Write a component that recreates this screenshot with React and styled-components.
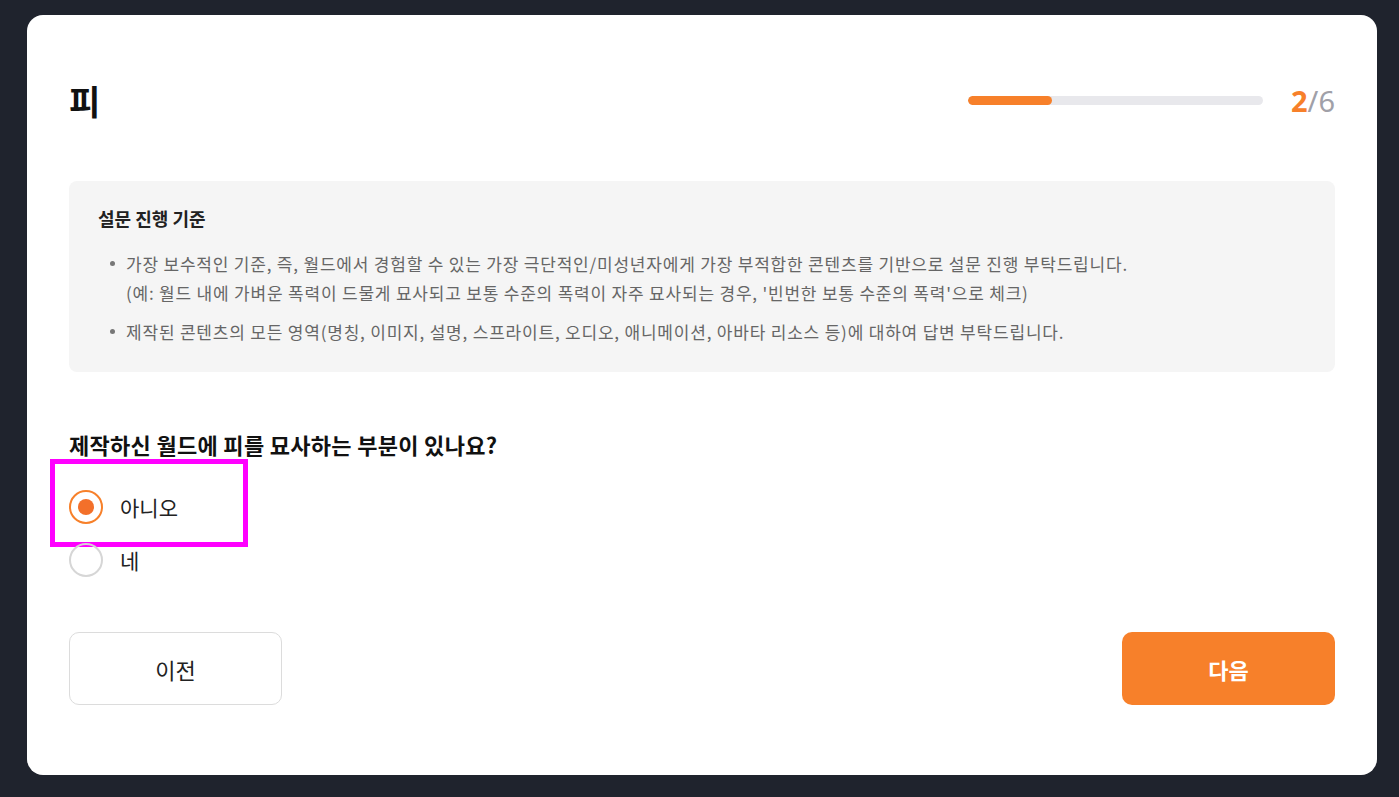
import styled, { createGlobalStyle } from "styled-components";

const GlobalStyle = createGlobalStyle`
  body {
    margin: 0;
    background: #1f232d;
    font-family: "Noto Sans CJK KR", "Noto Sans", sans-serif;
  }
`;

const Page = styled.div`
  padding: 15px 22px 21px 27px;
`;

const Card = styled.div`
  background: #fff;
  border-radius: 16px;
  padding: 65px 42px 70px 42px;
  display: flex;
  flex-direction: column;
`;

const Header = styled.div`
  display: flex;
  align-items: center;
  justify-content: space-between;
  height: 40px;
`;

const Title = styled.h1`
  margin: 0;
  font-size: 34px;
  font-weight: 700;
  color: #111;
`;

const Progress = styled.div`
  display: flex;
  align-items: center;
  gap: 28px;
`;

const Track = styled.div`
  width: 295px;
  height: 9px;
  border-radius: 5px;
  background: #e8e8ec;
  overflow: hidden;
`;

const Fill = styled.div`
  width: ${(p) => p.$pct}%;
  height: 100%;
  border-radius: 5px;
  background: #f7802a;
`;

const Count = styled.div`
  font-family: "Noto Sans", sans-serif;
  font-size: 29px;
  color: #a0a0a8;
  b {
    color: #f7802a;
    font-weight: 700;
  }
`;

const InfoBox = styled.div`
  margin-top: 61px;
  background: #f5f5f5;
  border-radius: 8px;
  padding: 26px 29px 26px 29px;
`;

const InfoTitle = styled.div`
  font-size: 18px;
  font-weight: 700;
  line-height: 22px;
  color: #222;
  margin-bottom: 20px;
`;

const BulletList = styled.ul`
  margin: 0;
  padding: 0;
  list-style: none;
  display: flex;
  flex-direction: column;
  gap: 10px;
`;

const Bullet = styled.li`
  position: relative;
  padding-left: 28px;
  font-size: 17px;
  letter-spacing: 0.8px;
  line-height: 29px;
  color: #666;
  &::before {
    content: "";
    position: absolute;
    left: 12px;
    top: 12px;
    width: 5px;
    height: 5px;
    border-radius: 50%;
    background: #777;
  }
`;

const Question = styled.div`
  margin-top: 59px;
  font-size: 22px;
  font-weight: 700;
  letter-spacing: 0.3px;
  line-height: 26px;
  color: #111;
`;

const Options = styled.div`
  margin-top: 30px;
  display: flex;
  flex-direction: column;
  gap: 13px;
`;

const Option = styled.label`
  position: relative;
  display: flex;
  align-items: center;
  gap: 17px;
  height: 40px;
  font-size: 21px;
  color: #222;
  cursor: pointer;
  ${(p) =>
    p.$marked &&
    `
    &::after {
      content: "";
      position: absolute;
      left: -19px;
      top: -28px;
      width: 188px;
      height: 78px;
      border: 5px solid #ff00ff;
    }
  `}
`;

const Radio = styled.span`
  box-sizing: border-box;
  width: 34px;
  height: 34px;
  border-radius: 50%;
  border: 2px solid ${(p) => (p.$checked ? "#f7802a" : "#d6d6d6")};
  display: flex;
  align-items: center;
  justify-content: center;
  &::before {
    content: "";
    width: 16px;
    height: 16px;
    border-radius: 50%;
    background: ${(p) => (p.$checked ? "#f3702a" : "transparent")};
  }
`;

const Footer = styled.div`
  margin-top: 52px;
  display: flex;
  justify-content: space-between;
`;

const Button = styled.button`
  width: 213px;
  height: 73px;
  border-radius: 10px;
  font-family: "Noto Sans CJK KR", sans-serif;
  font-size: 22px;
  cursor: pointer;
  border: ${(p) => (p.$primary ? "none" : "1.5px solid #dcdcdc")};
  background: ${(p) => (p.$primary ? "#f7802a" : "#fff")};
  color: ${(p) => (p.$primary ? "#fff" : "#222")};
  font-weight: ${(p) => (p.$primary ? 700 : 400)};
`;

export default function App() {
  return (
    <Page>
      <GlobalStyle />
      <Card>
        <Header>
          <Title>피</Title>
          <Progress>
            <Track>
              <Fill $pct={28.5} />
            </Track>
            <Count>
              <b>2</b>/6
            </Count>
          </Progress>
        </Header>
        <InfoBox>
          <InfoTitle>설문 진행 기준</InfoTitle>
          <BulletList>
            <Bullet>
              가장 보수적인 기준, 즉, 월드에서 경험할 수 있는 가장 극단적인/미성년자에게 가장 부적합한 콘텐츠를 기반으로 설문 진행 부탁드립니다.
              <br />
              (예: 월드 내에 가벼운 폭력이 드물게 묘사되고 보통 수준의 폭력이 자주 묘사되는 경우, '빈번한 보통 수준의 폭력'으로 체크)
            </Bullet>
            <Bullet>
              제작된 콘텐츠의 모든 영역(명칭, 이미지, 설명, 스프라이트, 오디오, 애니메이션, 아바타 리소스 등)에 대하여 답변 부탁드립니다.
            </Bullet>
          </BulletList>
        </InfoBox>
        <Question>제작하신 월드에 피를 묘사하는 부분이 있나요?</Question>
        <Options>
          <Option $marked>
            <Radio $checked />
            아니오
          </Option>
          <Option>
            <Radio />네
          </Option>
        </Options>
        <Footer>
          <Button>이전</Button>
          <Button $primary>다음</Button>
        </Footer>
      </Card>
    </Page>
  );
}
